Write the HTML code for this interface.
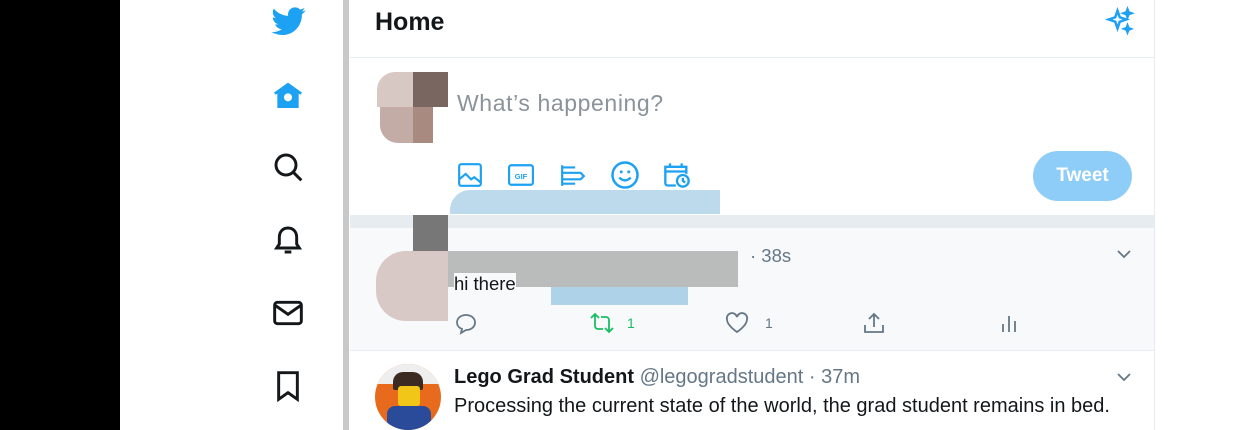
<!DOCTYPE html><html><head><style>
*{margin:0;padding:0;box-sizing:border-box}
body{width:1240px;height:430px;overflow:hidden;background:#fff;position:relative;font-family:"Liberation Sans",sans-serif}
.a{position:absolute}
svg{position:absolute;overflow:visible}
.ic{fill:none;stroke:#1da1f2;stroke-width:2}
.gr{fill:none;stroke:#657786;stroke-width:1.8}
.bk{fill:none;stroke:#14171a;stroke-width:2.2}
</style></head><body>
<div class="a" style="left:0;top:0;width:120px;height:430px;background:#000"></div>
<div class="a" style="left:343px;top:0;width:6px;height:430px;background:#c8c8c8"></div>
<div class="a" style="left:1154px;top:0;width:1px;height:430px;background:#e6ecf0"></div>
<!-- sidebar -->
<svg style="left:270px;top:4px" width="38" height="34" viewBox="0 0 24 24"><path fill="#1da1f2" d="M23.6 4.6c-.9.4-1.8.6-2.8.8 1-.6 1.8-1.6 2.1-2.7-.9.6-2 1-3.1 1.2-.9-1-2.200-1.5-3.600-1.5-2.7 0-4.9 2.2-4.9 4.9 0 .4 0 .8.1 1.1C7.3 8.2 3.7 6.3 1.3 3.3c-.4.7-.7 1.6-.7 2.5 0 1.7.9 3.2 2.2 4.1-.8 0-1.6-.2-2.2-.6v.1c0 2.4 1.7 4.4 3.9 4.8-.4.1-.8.2-1.3.2-.3 0-.6 0-.9-.1.6 2 2.4 3.4 4.6 3.4-1.7 1.3-3.8 2.1-6.1 2.1-.4 0-.8 0-1.200-.1 2.2 1.4 4.8 2.2 7.5 2.2 9.1 0 14-7.5 14-14v-.6c1-.7 1.8-1.6 2.5-2.5z"/></svg>
<svg style="left:272px;top:80px" width="32" height="32" viewBox="0 0 24 24"><path fill="#1da1f2" d="M12 2L1.5 9.5l1.2 1.6L4 10.2V21h16V10.2l1.3.9 1.2-1.6z"/><circle cx="12" cy="13" r="3" fill="#fff"/></svg>
<svg style="left:272px;top:151px" width="32" height="32" viewBox="0 0 24 24"><circle class="bk" cx="10.5" cy="10.5" r="7.5"/><path class="bk" d="M16 16l6 6"/></svg>
<svg style="left:272px;top:224px" width="32" height="32" viewBox="0 0 24 24"><path class="bk" d="M12 3c-4 0-6.5 3-6.5 7v5L3.5 18h17l-2-3v-5c0-4-2.5-7-6.5-7zM9.5 21h5"/></svg>
<svg style="left:272px;top:297px" width="32" height="32" viewBox="0 0 24 24"><rect class="bk" x="2" y="4" width="20" height="16" rx="2"/><path class="bk" d="M2 6l10 7 10-7"/></svg>
<svg style="left:272px;top:370px" width="32" height="32" viewBox="0 0 24 24"><path class="bk" d="M5 2h14v20l-7-5-7 5z"/></svg>
<!-- header -->
<div class="a" style="left:375px;top:8px;font-size:25px;font-weight:bold;color:#14171a">Home</div>
<svg style="left:1105px;top:7px" width="30" height="30" viewBox="0 0 24 24"><path class="ic" stroke-width="1.3" d="M10 3l1.8 5.2L17 10l-5.2 1.8L10 17l-1.8-5.2L3 10l5.2-1.8zM18 2l.8 2.2L21 5l-2.2.8L18 8l-.8-2.2L15 5l2.2-.8zM18 15l.7 1.8 1.8.7-1.8.7L18 20l-.7-1.8-1.8-.7 1.8-.7z"/></svg>
<div class="a" style="left:350px;top:57px;width:804px;height:1px;background:#e6ecf0"></div>
<!-- compose -->
<div class="a" style="left:377px;top:72px;width:36px;height:35px;background:#d8c8c4;border-radius:18px 0 0 0"></div>
<div class="a" style="left:413px;top:72px;width:35px;height:35px;background:#7a6660"></div>
<div class="a" style="left:380px;top:107px;width:33px;height:36px;background:#c4aca6;border-radius:0 0 0 18px"></div>
<div class="a" style="left:413px;top:107px;width:20px;height:36px;background:#a88a80"></div>
<div class="a" style="left:457px;top:90px;font-size:23px;letter-spacing:.6px;color:#8a939b">What’s happening?</div>
<svg style="left:457px;top:162px" width="26" height="26" viewBox="0 0 24 24"><rect class="ic" x="2" y="2" width="20" height="20" rx="2"/><path class="ic" d="M2 16l6-5 5 5 3-2 6 5"/></svg>
<svg style="left:507px;top:162px" width="28" height="26" viewBox="0 0 24 24"><rect class="ic" x="1" y="3" width="22" height="18" rx="2"/><text x="12" y="15.5" font-size="7" font-weight="bold" fill="#1da1f2" text-anchor="middle" font-family="Liberation Sans">GIF</text></svg>
<svg style="left:559px;top:162px" width="28" height="26" viewBox="0 0 24 24"><path class="ic" d="M2 3v19M2 5h12M2 10h17l3 3-3 3H2M2 20h12"/></svg>
<svg style="left:610px;top:160px" width="30" height="30" viewBox="0 0 24 24"><circle class="ic" cx="12" cy="12" r="10"/><circle cx="9" cy="9.5" r="1.2" fill="#1da1f2"/><circle cx="15" cy="9.5" r="1.2" fill="#1da1f2"/><path class="ic" d="M7.5 14c2.5 3 6.5 3 9 0"/></svg>
<svg style="left:663px;top:160px" width="28" height="30" viewBox="0 0 24 24"><path class="ic" d="M11 21H4a2 2 0 0 1-2-2V5h18v6M2 9h18M6 2v4M16 2v4"/><circle class="ic" cx="17" cy="17" r="5"/><path class="ic" d="M17 14.5V17l2 1.5"/></svg>
<div class="a" style="left:1033px;top:151px;width:99px;height:50px;border-radius:25px;background:#8ecdf8;color:#fff;font-weight:bold;font-size:19px;line-height:50px;text-align:center">Tweet</div>
<div class="a" style="left:450px;top:190px;width:270px;height:24px;background:#8fc2de;opacity:.6;border-radius:20px 0 0 0"></div>
<!-- divider -->
<div class="a" style="left:350px;top:215px;width:804px;height:13px;background:#e6ecf0"></div>
<!-- tweet 1 -->
<div class="a" style="left:350px;top:228px;width:804px;height:122px;background:#f7f9fa"></div>
<div class="a" style="left:350px;top:350px;width:804px;height:1px;background:#e6ecf0"></div>
<div class="a" style="left:413px;top:215px;width:35px;height:36px;background:#777"></div>
<div class="a" style="left:376px;top:251px;width:72px;height:70px;background:#d9c9c6;border-radius:30px 0 0 30px"></div>
<div class="a" style="left:448px;top:251px;width:290px;height:36px;background:#999;opacity:.65"></div>
<div class="a" style="left:551px;top:287px;width:137px;height:18px;background:#8fc2de;opacity:.7"></div>
<div class="a" style="left:454px;top:273px;font-size:18.5px;color:#14171a;background:#f7f9fa">hi there</div>
<div class="a" style="left:750px;top:245px;font-size:18.5px;color:#657786">· 38s</div>
<svg style="left:1116px;top:248px" width="16" height="12" viewBox="0 0 16 12"><path class="gr" d="M2 3l6 6 6-6"/></svg>
<svg style="left:454px;top:312px" width="24" height="24" viewBox="0 0 24 24"><path class="gr" d="M12 3c5 0 9 3 9 7.5S17 18 12 18l-5 3 1-4C5 16 3 13.5 3 10.5 3 6 7 3 12 3z"/></svg>
<svg style="left:589px;top:312px" width="26" height="22" viewBox="0 0 26 22"><path fill="none" stroke="#17bf63" stroke-width="1.8" d="M2 6l4-4 4 4M6 2v12a3 3 0 0 0 3 3h5M24 16l-4 4-4-4M20 20V8a3 3 0 0 0-3-3h-5"/></svg>
<div class="a" style="left:627px;top:315px;font-size:14px;color:#17bf63">1</div>
<svg style="left:725px;top:312px" width="24" height="22" viewBox="0 0 24 22"><path class="gr" d="M12 20S2 13.5 2 7.5A5 5 0 0 1 12 5a5 5 0 0 1 10 2.5C22 13.5 12 20 12 20z"/></svg>
<div class="a" style="left:765px;top:315px;font-size:14px;color:#657786">1</div>
<svg style="left:862px;top:311px" width="24" height="24" viewBox="0 0 24 24"><path class="gr" d="M12 3v13M7 8l5-5 5 5M3 14v7h18v-7"/></svg>
<svg style="left:998px;top:312px" width="22" height="22" viewBox="0 0 22 22"><path class="gr" d="M5 12v8M11 4v16M17 9v11"/></svg>
<!-- tweet 2 -->
<div class="a" style="left:375px;top:364px;width:66px;height:66px;border-radius:50%;background:#e86a1c;overflow:hidden">
<div class="a" style="left:0;top:0;width:66px;height:20px;background:#eee"></div>
<div class="a" style="left:18px;top:8px;width:30px;height:18px;background:#3a2a22;border-radius:10px 10px 2px 2px"></div>
<div class="a" style="left:23px;top:22px;width:22px;height:20px;background:#f2c618;border-radius:3px"></div>
<div class="a" style="left:12px;top:42px;width:44px;height:30px;background:#2a4a9a;border-radius:8px"></div></div>
<div class="a" style="left:454px;top:366px;font-size:20px;color:#14171a"><b>Lego Grad Student</b> <span style="color:#657786">@legogradstudent · 37m</span></div>
<div class="a" style="left:454px;top:395px;font-size:20px;color:#14171a">Processing the current state of the world, the grad student remains in bed.</div>
<svg style="left:1116px;top:371px" width="16" height="12" viewBox="0 0 16 12"><path class="gr" d="M2 3l6 6 6-6"/></svg>
</body></html>
